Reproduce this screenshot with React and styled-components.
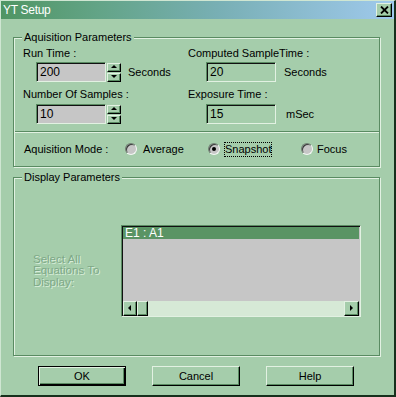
import React from "react";
import styled, { createGlobalStyle, css } from "styled-components";

const BG = "#a5cdab";
const DARK = "#5a8b62";
const LIGHT = "#e2f1e2";

const Global = createGlobalStyle`
  html, body { margin: 0; padding: 0; background: ${BG}; }
  body { font-family: "Liberation Sans", Arial, sans-serif; font-size: 11px; color: #000; }
  * { box-sizing: border-box; }
`;

const Window = styled.div`
  width: 396px;
  height: 397px;
  background: ${BG};
  border-top: 1px solid #cfe6d2;
  border-left: 1px solid #cfe6d2;
  border-right: 2px solid #17301c;
  border-bottom: 2px solid #17301c;
  display: flex;
  flex-direction: column;
`;

const TitleBar = styled.div`
  height: 18px;
  display: flex;
  align-items: center;
  justify-content: space-between;
  padding: 0 2px 0 2px;
  background: linear-gradient(90deg, #4f9563 0%, #63a487 25%, #78afb4 55%, #9fc9ec 100%);
`;

const TitleText = styled.span`
  color: #fff;
  font-size: 12px;
  letter-spacing: -0.3px;
`;

const raised = css`
  background: ${BG};
  border: 1px solid;
  border-color: ${LIGHT} #000 #000 ${LIGHT};
  box-shadow: inset -1px -1px 0 ${DARK};
`;

const CloseBtn = styled.div`
  ${raised};
  width: 16px;
  height: 14px;
  display: flex;
  align-items: center;
  justify-content: center;
`;

const Body = styled.div`
  flex: 1;
  display: flex;
  flex-direction: column;
  padding: 18px 12px 0 12px;
`;

const Group = styled.div`
  position: relative;
  border: 1px solid ${DARK};
  box-shadow: inset 1px 1px 0 ${LIGHT}, 1px 1px 0 ${LIGHT};
  height: ${(p) => p.$h}px;
  margin-bottom: ${(p) => p.$mb || 0}px;
  display: flex;
  flex-direction: column;
  width: 367px;
`;

const Legend = styled.span`
  position: absolute;
  left: 8px;
  top: -8px;
  padding: 0 2px;
  background: ${BG};
  line-height: 14px;
`;

const ParamGrid = styled.div`
  display: grid;
  grid-template-columns: 165px 1fr;
  padding: 8px 0 0 9px;
  height: 93px;
`;

const Cell = styled.div`
  display: flex;
  flex-direction: column;
`;

const Label = styled.div`
  line-height: 14px;
  height: 14px;
  white-space: nowrap;
  margin-top: ${(p) => p.$mt || 0}px;
`;

const FieldRow = styled.div`
  display: flex;
  align-items: center;
  margin-top: ${(p) => p.$mt}px;
  padding-left: ${(p) => p.$indent}px;
`;

const Input = styled.div`
  width: 70px;
  height: 20px;
  border: 1px solid;
  border-color: ${DARK} ${LIGHT} ${LIGHT} ${DARK};
  box-shadow: inset 1px 1px 0 #111;
  background: ${(p) => (p.$ro ? BG : "#c6c6c6")};
  padding: 0 0 0 3px;
  font-size: 12px;
  line-height: 18px;
`;

const Spinner = styled.div`
  display: flex;
  flex-direction: column;
  gap: 1px;
  margin-left: 1px;
`;

const SpinBtn = styled.div`
  ${raised};
  width: 14px;
  height: 9px;
  display: flex;
  align-items: center;
  justify-content: center;
`;

const Unit = styled.span`
  margin-left: ${(p) => p.$ml}px;
`;

const Separator = styled.div`
  border-top: 1px solid ${DARK};
  border-bottom: 1px solid ${LIGHT};
  margin-left: 1px;
`;

const ModeRow = styled.div`
  flex: 1;
  display: flex;
  align-items: center;
  padding-left: 10px;
  padding-bottom: 1px;
`;

const ModeLabel = styled.span`
  width: 101px;
`;

const RadioOption = styled.div`
  width: ${(p) => p.$w}px;
  display: flex;
  align-items: center;
  gap: ${(p) => p.$gap}px;
`;

const RadioCircle = styled.span`
  width: 12px;
  height: 12px;
  border-radius: 50%;
  background: #c6c6c6;
  border: 1px solid;
  border-color: #6f7f72 #f4f8f4 #f4f8f4 #6f7f72;
  box-shadow: inset 1px 1px 0 #3a3a3a;
  display: flex;
  align-items: center;
  justify-content: center;
  &::after {
    content: "";
    width: 4px;
    height: 4px;
    border-radius: 50%;
    background: ${(p) => (p.$on ? "#000" : "transparent")};
  }
`;

const RadioText = styled.span`
  padding: 0;
  line-height: 13px;
  border: 1px dotted ${(p) => (p.$focus ? "#000" : "transparent")};
`;

const DisplayContent = styled.div`
  display: flex;
  align-items: center;
  padding: 47px 0 0 19px;
`;

const DisabledText = styled.div`
  width: 88px;
  color: #7ea887;
  text-shadow: 1px 1px 0 #d9edda;
  line-height: 11.5px;
  font-size: 11.5px;
`;

const ListBox = styled.div`
  width: 240px;
  height: 92px;
  border: 1px solid;
  border-color: ${DARK} ${LIGHT} ${LIGHT} ${DARK};
  box-shadow: inset 1px 1px 0 #111;
  background: #c6c6c6;
  display: flex;
  flex-direction: column;
  padding: 1px 1px 0 1px;
`;

const ListItem = styled.div`
  height: 12px;
  background: #5a9464;
  color: #fff;
  line-height: 12px;
  padding-left: 2px;
  font-size: 12px;
`;

const ListSpace = styled.div`
  flex: 1;
`;

const HScroll = styled.div`
  height: 15px;
  display: flex;
  background: #d6e9d6;
`;

const ScrollBtn = styled.div`
  ${raised};
  width: ${(p) => p.$w}px;
  height: 15px;
  display: flex;
  align-items: center;
  justify-content: center;
`;

const Track = styled.div`
  flex: 1;
`;

const ButtonRow = styled.div`
  display: flex;
  gap: 26px;
  padding: 10px 0 0 25px;
`;

const Button = styled.div`
  width: 88px;
  height: 20px;
  display: flex;
  align-items: center;
  justify-content: center;
  ${(p) =>
    p.$default
      ? css`
          border: 1px solid #000;
          background: ${BG};
          box-shadow: inset 1px 1px 0 ${LIGHT}, inset -1px -1px 0 #000,
            inset -2px -2px 0 ${DARK};
        `
      : raised}
`;

const Tri = ({ dir }) => {
  const pts = {
    up: "0,3 3,0 6,3",
    down: "0,0 6,0 3,3",
    left: "3,0 3,6 0,3",
    right: "0,0 3,3 0,6",
  }[dir];
  const vertical = dir === "up" || dir === "down";
  return (
    <svg width={vertical ? 6 : 4} height={vertical ? 4 : 7} viewBox={vertical ? "0 0 6 4" : "0 0 4 7"}>
      <polygon points={pts} fill="#000" />
    </svg>
  );
};

export default function App() {
  return (
    <>
      <Global />
      <Window>
        <TitleBar>
          <TitleText>YT Setup</TitleText>
          <CloseBtn>
            <svg width="9" height="8" viewBox="0 0 9 8">
              <path d="M1 0.5 L8 7.5 M8 0.5 L1 7.5" stroke="#000" strokeWidth="1.8" />
            </svg>
          </CloseBtn>
        </TitleBar>
        <Body>
          <Group $h={130} $mb={10}>
            <Legend>Aquisition Parameters</Legend>
            <ParamGrid>
              <Cell>
                <Label>Run Time :</Label>
                <FieldRow $mt={2} $indent={13}>
                  <Input>200</Input>
                  <Spinner>
                    <SpinBtn><Tri dir="up" /></SpinBtn>
                    <SpinBtn><Tri dir="down" /></SpinBtn>
                  </Spinner>
                  <Unit $ml={7}>Seconds</Unit>
                </FieldRow>
                <Label $mt={5}>Number Of Samples :</Label>
                <FieldRow $mt={3} $indent={13}>
                  <Input>10</Input>
                  <Spinner>
                    <SpinBtn><Tri dir="up" /></SpinBtn>
                    <SpinBtn><Tri dir="down" /></SpinBtn>
                  </Spinner>
                </FieldRow>
              </Cell>
              <Cell>
                <Label>Computed SampleTime :</Label>
                <FieldRow $mt={2} $indent={18}>
                  <Input $ro>20</Input>
                  <Unit $ml={8}>Seconds</Unit>
                </FieldRow>
                <Label $mt={5}>Exposure Time :</Label>
                <FieldRow $mt={3} $indent={18}>
                  <Input $ro>15</Input>
                  <Unit $ml={10}>mSec</Unit>
                </FieldRow>
              </Cell>
            </ParamGrid>
            <Separator />
            <ModeRow>
              <ModeLabel>Aquisition Mode :</ModeLabel>
              <RadioOption $w={83} $gap={5}>
                <RadioCircle />
                <RadioText>Average</RadioText>
              </RadioOption>
              <RadioOption $w={93} $gap={4}>
                <RadioCircle $on />
                <RadioText $focus>Snapshot</RadioText>
              </RadioOption>
              <RadioOption $w={70} $gap={3}>
                <RadioCircle />
                <RadioText>Focus</RadioText>
              </RadioOption>
            </ModeRow>
          </Group>
          <Group $h={179}>
            <Legend>Display Parameters</Legend>
            <DisplayContent>
              <DisabledText>
                Select All
                <br />
                Equations To
                <br />
                Display:
              </DisabledText>
              <ListBox>
                <ListItem>E1 : A1</ListItem>
                <ListSpace />
                <HScroll>
                  <ScrollBtn $w={14}><Tri dir="left" /></ScrollBtn>
                  <ScrollBtn $w={11} />
                  <Track />
                  <ScrollBtn $w={15}><Tri dir="right" /></ScrollBtn>
                </HScroll>
              </ListBox>
            </DisplayContent>
          </Group>
          <ButtonRow>
            <Button $default>OK</Button>
            <Button>Cancel</Button>
            <Button>Help</Button>
          </ButtonRow>
        </Body>
      </Window>
    </>
  );
}
